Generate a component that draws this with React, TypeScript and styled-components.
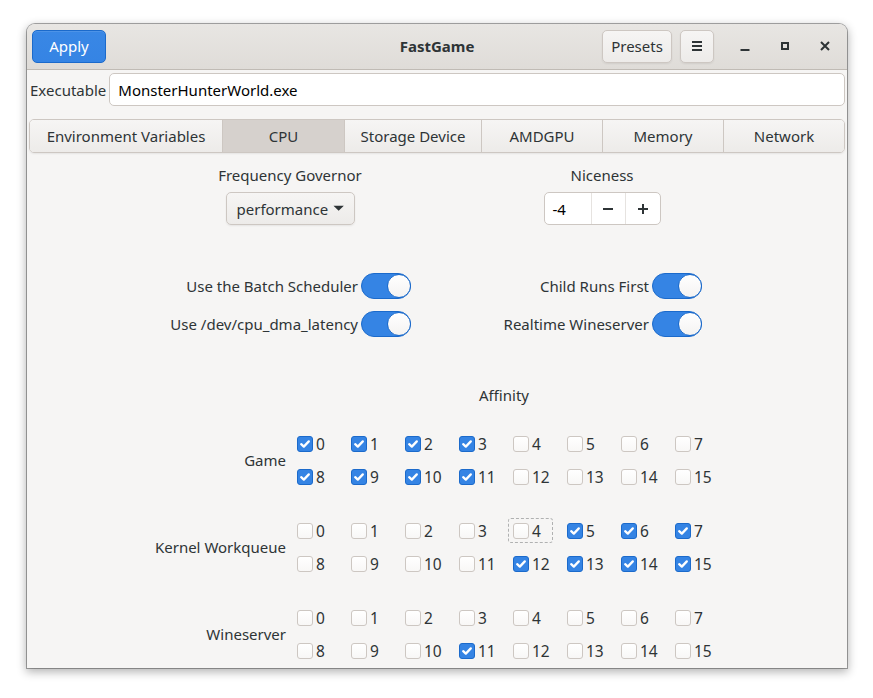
import React from "react";
import styled, { createGlobalStyle, css } from "styled-components";

const GlobalStyle = createGlobalStyle`
  html, body { margin: 0; padding: 0; background: #ffffff; }
  body {
    font-family: "Noto Sans", "Open Sans", sans-serif;
    font-size: 15px;
    color: #2e3436;
  }
  * { box-sizing: border-box; }
`;

const Page = styled.div`
  width: 873px;
  height: 698px;
  padding: 24px 26px 0 27px;
  overflow: hidden;
`;

const Window = styled.div`
  width: 820px;
  height: 644px;
  background: #f6f5f4;
  border-radius: 8px 8px 0 0;
  box-shadow: 0 3px 10px 1px rgba(0, 0, 0, 0.3), 0 0 0 1px rgba(0, 0, 0, 0.32);
  display: flex;
  flex-direction: column;
  overflow: hidden;
`;

const HeaderBar = styled.header`
  height: 46px;
  flex: none;
  display: flex;
  align-items: center;
  padding: 0 2px 1px 5px;
  background: linear-gradient(to bottom, #e8e6e3, #dfdcd8);
  border-bottom: 1px solid #c0bbb5;
  border-radius: 8px 8px 0 0;
  position: relative;
`;

const Title = styled.div`
  position: absolute;
  left: 0;
  right: 0;
  text-align: center;
  font-weight: bold;
  font-size: 15px;
  pointer-events: none;
`;

const Button = styled.button<{ $suggested?: boolean; $w?: number }>`
  height: 33px;
  width: ${(p) => (p.$w ? `${p.$w}px` : "auto")};
  padding: 0 10px;
  border-radius: 5px;
  font-family: inherit;
  font-size: 15px;
  display: inline-flex;
  align-items: center;
  justify-content: center;
  ${(p) =>
    p.$suggested
      ? css`
          color: #ffffff;
          background: linear-gradient(to bottom, #3987e5, #3584e4);
          border: 1px solid #1b6acb;
          box-shadow: inset 0 1px rgba(255, 255, 255, 0.1);
        `
      : css`
          color: #2e3436;
          background: linear-gradient(to bottom, #f6f5f4, #edebe9);
          border: 1px solid #cdc7c2;
          box-shadow: 0 1px 2px rgba(0, 0, 0, 0.07);
        `}
`;

const HeaderRight = styled.div`
  margin-left: auto;
  display: flex;
  align-items: center;
  gap: 8px;
`;

const WinControls = styled.div`
  display: flex;
  align-items: center;
  margin-left: 11px;
`;

const WinButton = styled.div`
  width: 40px;
  height: 33px;
  display: flex;
  align-items: center;
  justify-content: center;
`;

const ExecRow = styled.div`
  display: flex;
  align-items: center;
  gap: 3px;
  padding: 3px 2px 0 3px;
`;

const ExecLabel = styled.span`
  font-size: 15px;
`;

const Entry = styled.div`
  flex: 1;
  height: 33px;
  background: #ffffff;
  border: 1px solid #cdc7c2;
  border-radius: 5px;
  display: flex;
  align-items: center;
  padding: 0 8px;
  color: #000000;
  font-size: 15px;
`;

const Tabs = styled.div`
  margin: 13px 2px 0 2px;
  height: 34px;
  display: grid;
  grid-template-columns: 192px 122px 137px 121px 121px 1fr;
  border: 1px solid #cdc7c2;
  border-radius: 5px;
  overflow: hidden;
  box-shadow: 0 1px 2px rgba(0, 0, 0, 0.07);
`;

const Tab = styled.div<{ $active?: boolean }>`
  display: flex;
  align-items: center;
  justify-content: center;
  font-size: 15px;
  border-left: 1px solid #cdc7c2;
  &:first-child { border-left: none; }
  background: ${(p) =>
    p.$active ? "#d6d1cd" : "linear-gradient(to bottom, #f6f5f4, #edebe9)"};
`;

const TopGrid = styled.div`
  margin-top: 12px;
  padding-left: 107px;
  display: grid;
  grid-template-columns: 312px 312px;
`;

const Field = styled.div`
  display: flex;
  flex-direction: column;
  align-items: center;
  gap: 7px;
`;

const FieldLabel = styled.div`
  line-height: 20px;
  font-size: 15px;
`;

const Combo = styled(Button)`
  width: 129px;
  gap: 5px;
  padding: 0 9px 0 10px;
`;

const Spin = styled.div`
  height: 33px;
  width: 117px;
  display: flex;
  background: #ffffff;
  border: 1px solid #cdc7c2;
  border-radius: 5px;
  overflow: hidden;
`;

const SpinText = styled.div`
  width: 46px;
  display: flex;
  align-items: center;
  padding-left: 8px;
  color: #000;
  font-size: 15px;
`;

const SpinButton = styled.div`
  flex: 1;
  display: flex;
  align-items: center;
  justify-content: center;
  border-left: 1px solid #e6e3e0;
`;

const SwitchGrid = styled.div`
  margin-top: 48px;
  display: grid;
  grid-template-columns: 384px 291px;
  row-gap: 12px;
`;

const SwitchRow = styled.div`
  display: flex;
  align-items: center;
  justify-content: flex-end;
  gap: 3px;
  height: 26px;
  font-size: 15px;
`;

const SwitchTrack = styled.div`
  width: 50px;
  height: 26px;
  border-radius: 13px;
  background: #3584e4;
  border: 1px solid #1b6acb;
  display: flex;
  align-items: center;
  justify-content: flex-end;
`;

const SwitchKnob = styled.div`
  width: 24px;
  height: 24px;
  border-radius: 50%;
  background: linear-gradient(to bottom, #ffffff, #f4f3f2);
  border: 1px solid #1b6acb;
  margin-right: -1px;
`;

const AffinityTitle = styled.div`
  margin-top: 48px;
  line-height: 20px;
  margin-left: 270px;
  width: 414px;
  text-align: center;
  font-size: 15px;
`;

const Group = styled.div<{ $first?: boolean }>`
  margin-top: ${(p) => (p.$first ? "22px" : "21px")};
  display: grid;
  grid-template-columns: 270px repeat(8, 54px);
  grid-template-rows: 33px 33px;
`;

const GroupLabel = styled.div`
  grid-row: 1 / span 2;
  align-self: center;
  text-align: right;
  padding-right: 11px;
  font-size: 15px;
`;

const CheckItem = styled.div<{ $focus?: boolean }>`
  align-self: center;
  justify-self: start;
  display: flex;
  align-items: center;
  gap: 3px;
  height: 25px;
  margin-left: -5px;
  padding: 0 4px;
  border: 1px dashed transparent;
  border-radius: 3px;
  font-size: 15.5px;
  ${(p) =>
    p.$focus &&
    css`
      border-color: rgba(46, 52, 54, 0.35);
      width: 45px;
    `}
`;

const Box = styled.div<{ $checked?: boolean }>`
  width: 16px;
  height: 16px;
  border-radius: 3px;
  flex: none;
  display: flex;
  align-items: center;
  justify-content: center;
  ${(p) =>
    p.$checked
      ? css`
          background: #3584e4;
          border: 1px solid #1b6acb;
        `
      : css`
          background: linear-gradient(to bottom, #ffffff, #f8f7f6);
          border: 1px solid #cdc7c2;
        `}
`;

const CheckMark = () => (
  <svg width="12" height="12" viewBox="0 0 12 12">
    <path
      d="M2.2 6.2 L4.8 8.6 L9.8 3.4"
      fill="none"
      stroke="#ffffff"
      strokeWidth="2.3"
      strokeLinecap="round"
      strokeLinejoin="round"
    />
  </svg>
);

const Check = ({ n, checked, focus }: { n: number; checked: boolean; focus?: boolean }) => (
  <CheckItem $focus={focus}>
    <Box $checked={checked}>{checked && <CheckMark />}</Box>
    <span>{n}</span>
  </CheckItem>
);

const AffinityGroup = ({
  label,
  checked,
  first,
  focusIndex,
}: {
  label: string;
  checked: number[];
  first?: boolean;
  focusIndex?: number;
}) => {
  const cpus = Array.from({ length: 16 }, (_, i) => i);
  return (
    <Group $first={first}>
      <GroupLabel>{label}</GroupLabel>
      {cpus.map((i) => (
        <Check key={i} n={i} checked={checked.includes(i)} focus={focusIndex === i} />
      ))}
    </Group>
  );
};

const MenuIcon = () => (
  <svg width="12" height="12" viewBox="0 0 12 12">
    <rect x="1" y="1" width="10" height="2" fill="#2e3436" />
    <rect x="1" y="5" width="10" height="2" fill="#2e3436" />
    <rect x="1" y="9" width="10" height="2" fill="#2e3436" />
  </svg>
);

const MinIcon = () => (
  <svg width="12" height="12" viewBox="0 0 12 12">
    <rect x="1.5" y="9" width="9" height="2" fill="#2e3436" />
  </svg>
);

const MaxIcon = () => (
  <svg width="12" height="12" viewBox="0 0 12 12">
    <rect x="3" y="3" width="6" height="6" fill="none" stroke="#2e3436" strokeWidth="2" />
  </svg>
);

const CloseIcon = () => (
  <svg width="12" height="12" viewBox="0 0 12 12">
    <path d="M2 2 L10 10 M10 2 L2 10" stroke="#2e3436" strokeWidth="2" />
  </svg>
);

const Caret = () => (
  <svg width="12" height="7" viewBox="0 0 12 7">
    <path d="M0.5 0.5 L11.5 0.5 L6 6 Z" fill="#2e3436" />
  </svg>
);

const Minus = () => (
  <svg width="12" height="12" viewBox="0 0 12 12">
    <rect x="1" y="5" width="10" height="2" fill="#2e3436" />
  </svg>
);

const Plus = () => (
  <svg width="12" height="12" viewBox="0 0 12 12">
    <rect x="1" y="5" width="10" height="2" fill="#2e3436" />
    <rect x="5" y="1" width="2" height="10" fill="#2e3436" />
  </svg>
);

const Toggle = () => (
  <SwitchTrack>
    <SwitchKnob />
  </SwitchTrack>
);

export default function App() {
  const tabs = ["Environment Variables", "CPU", "Storage Device", "AMDGPU", "Memory", "Network"];
  return (
    <Page>
      <GlobalStyle />
      <Window>
        <HeaderBar>
          <Button $suggested $w={74}>Apply</Button>
          <Title>FastGame</Title>
          <HeaderRight>
            <Button $w={70}>Presets</Button>
            <Button $w={34}>
              <MenuIcon />
            </Button>
          </HeaderRight>
          <WinControls>
            <WinButton>
              <MinIcon />
            </WinButton>
            <WinButton>
              <MaxIcon />
            </WinButton>
            <WinButton>
              <CloseIcon />
            </WinButton>
          </WinControls>
        </HeaderBar>

        <ExecRow>
          <ExecLabel>Executable</ExecLabel>
          <Entry>MonsterHunterWorld.exe</Entry>
        </ExecRow>

        <Tabs>
          {tabs.map((t) => (
            <Tab key={t} $active={t === "CPU"}>
              {t}
            </Tab>
          ))}
        </Tabs>

        <TopGrid>
          <Field>
            <FieldLabel>Frequency Governor</FieldLabel>
            <Combo>
              <span>performance</span>
              <Caret />
            </Combo>
          </Field>
          <Field>
            <FieldLabel>Niceness</FieldLabel>
            <Spin>
              <SpinText>-4</SpinText>
              <SpinButton>
                <Minus />
              </SpinButton>
              <SpinButton>
                <Plus />
              </SpinButton>
            </Spin>
          </Field>
        </TopGrid>

        <SwitchGrid>
          <SwitchRow>
            Use the Batch Scheduler
            <Toggle />
          </SwitchRow>
          <SwitchRow>
            Child Runs First
            <Toggle />
          </SwitchRow>
          <SwitchRow>
            Use /dev/cpu_dma_latency
            <Toggle />
          </SwitchRow>
          <SwitchRow>
            Realtime Wineserver
            <Toggle />
          </SwitchRow>
        </SwitchGrid>

        <AffinityTitle>Affinity</AffinityTitle>
        <AffinityGroup label="Game" first checked={[0, 1, 2, 3, 8, 9, 10, 11]} />
        <AffinityGroup label="Kernel Workqueue" checked={[5, 6, 7, 12, 13, 14, 15]} focusIndex={4} />
        <AffinityGroup label="Wineserver" checked={[11]} />
      </Window>
    </Page>
  );
}
